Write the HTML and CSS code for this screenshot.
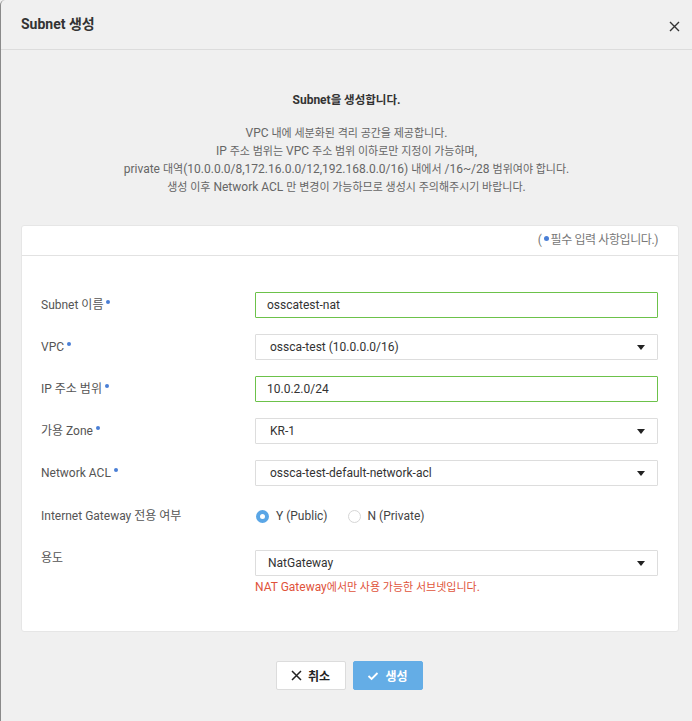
FILE: index.html
```html
<!DOCTYPE html>
<html lang="ko">
<head>
<meta charset="utf-8">
<title>Subnet 생성</title>
<link rel="stylesheet" href="styles.css">
</head>
<body>
<div class="modal">
  <div class="modal-header">
    <h1 class="modal-title">Subnet 생성</h1>
    <button class="close-btn" type="button" aria-label="닫기">
      <svg width="11" height="11" viewBox="0 0 11 11"><path d="M1 1L10 10M10 1L1 10" stroke="#333" stroke-width="1.4" fill="none"/></svg>
    </button>
  </div>
  <div class="intro">
    <p class="intro-title">Subnet<span class="ko">을 생성합니다</span>.</p>
    <p class="intro-text">VPC <span class="ko">내에 세분화된 격리 공간을 제공합니다</span>.<br>IP <span class="ko">주소 범위는</span> VPC <span class="ko">주소 범위 이하로만 지정이 가능하며</span>,<br>private <span class="ko">대역</span>(10.0.0.0/8,172.16.0.0/12,192.168.0.0/16) <span class="ko">내에서</span> /16~/28 <span class="ko">범위여야 합니다</span>.<br><span class="ko">생성 이후</span> Network ACL <span class="ko">만 변경이 가능하므로 생성시 주의해주시기 바랍니다</span>.</p>
  </div>
  <div class="card">
    <div class="card-head">(<span class="dot"></span>필수 입력 사항입니다.)</div>
    <div class="card-body">
      <div class="row">
        <div class="label">Subnet 이름<span class="dot"></span></div>
        <div class="field"><div class="input valid">osscatest-nat</div></div>
      </div>
      <div class="row">
        <div class="label">VPC<span class="dot"></span></div>
        <div class="field"><div class="input select">ossca-test (10.0.0.0/16)<span class="caret"></span></div></div>
      </div>
      <div class="row">
        <div class="label">IP 주소 범위<span class="dot"></span></div>
        <div class="field"><div class="input valid">10.0.2.0/24</div></div>
      </div>
      <div class="row">
        <div class="label">가용 Zone<span class="dot"></span></div>
        <div class="field"><div class="input select">KR-1<span class="caret"></span></div></div>
      </div>
      <div class="row">
        <div class="label">Network ACL<span class="dot"></span></div>
        <div class="field"><div class="input select">ossca-test-default-network-acl<span class="caret"></span></div></div>
      </div>
      <div class="row row-radio">
        <div class="label">Internet Gateway 전용 여부</div>
        <div class="field radios">
          <label class="radio"><span class="radio-circle checked"></span>Y (Public)</label>
          <label class="radio"><span class="radio-circle"></span>N (Private)</label>
        </div>
      </div>
      <div class="row row-top">
        <div class="label">용도</div>
        <div class="field">
          <div class="input select sel-narrow">NatGateway<span class="caret"></span></div>
          <p class="error">NAT Gateway<span class="ko">에서만 사용 가능한 서브넷입니다</span>.</p>
        </div>
      </div>
    </div>
  </div>
  <div class="actions">
    <button class="btn btn-cancel" type="button">
      <svg width="11" height="11" viewBox="0 0 11 11"><path d="M1 1L10 10M10 1L1 10" stroke="#222" stroke-width="1.5" fill="none"/></svg>
      취소
    </button>
    <button class="btn btn-primary" type="button">
      <svg width="12" height="10" viewBox="0 0 12 10"><path d="M1.5 5L4.6 8L10.5 2" stroke="#fff" stroke-width="1.8" fill="none"/></svg>
      생성
    </button>
  </div>
</div>
</body>
</html>
```
FILE: styles.css
```css
* { box-sizing: border-box; }
html, body { margin: 0; padding: 0; }
body {
  background: #f0f0f0;
  font-family: Roboto, "Noto Sans CJK KR", sans-serif;
  color: #333;
  width: 692px;
  height: 721px;
  overflow: hidden;
}
.modal {
  min-height: 721px;
  border-left: 1px solid #8a8a8a;
  border-top-left-radius: 5px;
  background: #f0f0f0;
}
.modal-header {
  height: 50px;
  border-bottom: 1px solid #dcdcdc;
  display: flex;
  align-items: center;
  justify-content: space-between;
  padding: 0 12px 0 20px;
}
.modal-title {
  margin: 0 0 3px;
  font-size: 14px;
  font-weight: 700;
  color: #333;
}
.close-btn {
  border: 0;
  background: none;
  padding: 0;
  width: 11px;
  height: 11px;
  margin-top: 4px;
  display: flex;
}
.ko { font-size: 11px; line-height: 12px; }
.intro {
  padding-top: 41px;
  text-align: center;
}
.intro-title {
  margin: 0;
  font-size: 12px;
  line-height: 18px;
  font-weight: 700;
  color: #333;
}
.intro-title .ko { font-size: 11.5px; }
.intro-text {
  margin: 15px 0 0;
  font-size: 12px;
  line-height: 18px;
  color: #666;
}
.card {
  margin: 29px 13px 0 20px;
  background: #fff;
  border: 1px solid #e6e6e6;
  border-radius: 3px;
}
.card-head {
  height: 30px;
  border-bottom: 1px solid #e2e2e2;
  text-align: right;
  padding: 6px 20px 0 0;
  font-size: 12px;
  line-height: 16px;
  color: #777;
  letter-spacing: -0.4px;
}
.dot {
  display: inline-block;
  width: 4px;
  height: 4px;
  border-radius: 50%;
  background: #4a7fd6;
  vertical-align: top;
  margin: 4px 1px 0 3px;
}
.card-head .dot { width: 5px; height: 5px; margin: 4px 2px 0 2px; }
.card-body {
  padding: 36px 20px 36px 19px;
  display: flex;
  flex-direction: column;
  gap: 16px;
}
.row {
  display: flex;
  align-items: center;
}
.label {
  width: 214px;
  flex: none;
  font-size: 12px;
  line-height: 26px;
  color: #555;
}
.label .dot { margin-top: 8px; }
.field { flex: 1; }
.input {
  height: 26px;
  border: 1px solid #ddd;
  border-radius: 1px;
  background: #fff;
  font-size: 12px;
  line-height: 24px;
  color: #333;
  padding-left: 11px;
  position: relative;
}
.input.valid { border-color: #6cc24a; }
.input.select { padding-left: 14px; }
.input.sel-narrow { padding-left: 12px; }
.caret {
  position: absolute;
  right: 12px;
  top: 10px;
  width: 0;
  height: 0;
  border-left: 4px solid transparent;
  border-right: 4px solid transparent;
  border-top: 5px solid #222;
}
.row-radio { height: 28px; margin-bottom: 4px; }
.radios {
  display: flex;
  align-items: center;
}
.radio {
  display: flex;
  align-items: center;
  font-size: 12px;
  color: #444;
  margin-right: 19px;
}
.radio-circle {
  width: 13px;
  height: 13px;
  border-radius: 50%;
  border: 1px solid #d6d6d6;
  background: #fff;
  margin: 0 7px 0 1px;
}
.radio-circle.checked {
  border: 4px solid #5aa6e6;
}
.row-top { align-items: flex-start; }
.row-top .label { line-height: 16px; }
.error {
  margin: 3px 0 0;
  font-size: 12px;
  line-height: 16px;
  color: #e0533a;
}
.actions {
  margin-top: 29px;
  display: flex;
  justify-content: center;
  gap: 7px;
  padding-left: 5px;
}
.btn {
  width: 70px;
  height: 29px;
  display: flex;
  align-items: center;
  justify-content: center;
  gap: 6px;
  font-family: Roboto, "Noto Sans CJK KR", sans-serif;
  font-size: 12px;
  font-weight: 700;
  border-radius: 2px;
  padding: 0;
}
.btn-cancel {
  background: #fff;
  border: 1px solid #dcdcdc;
  color: #222;
}
.btn-primary {
  background: #64ade6;
  border: 1px solid #64ade6;
  color: #fff;
}
```
